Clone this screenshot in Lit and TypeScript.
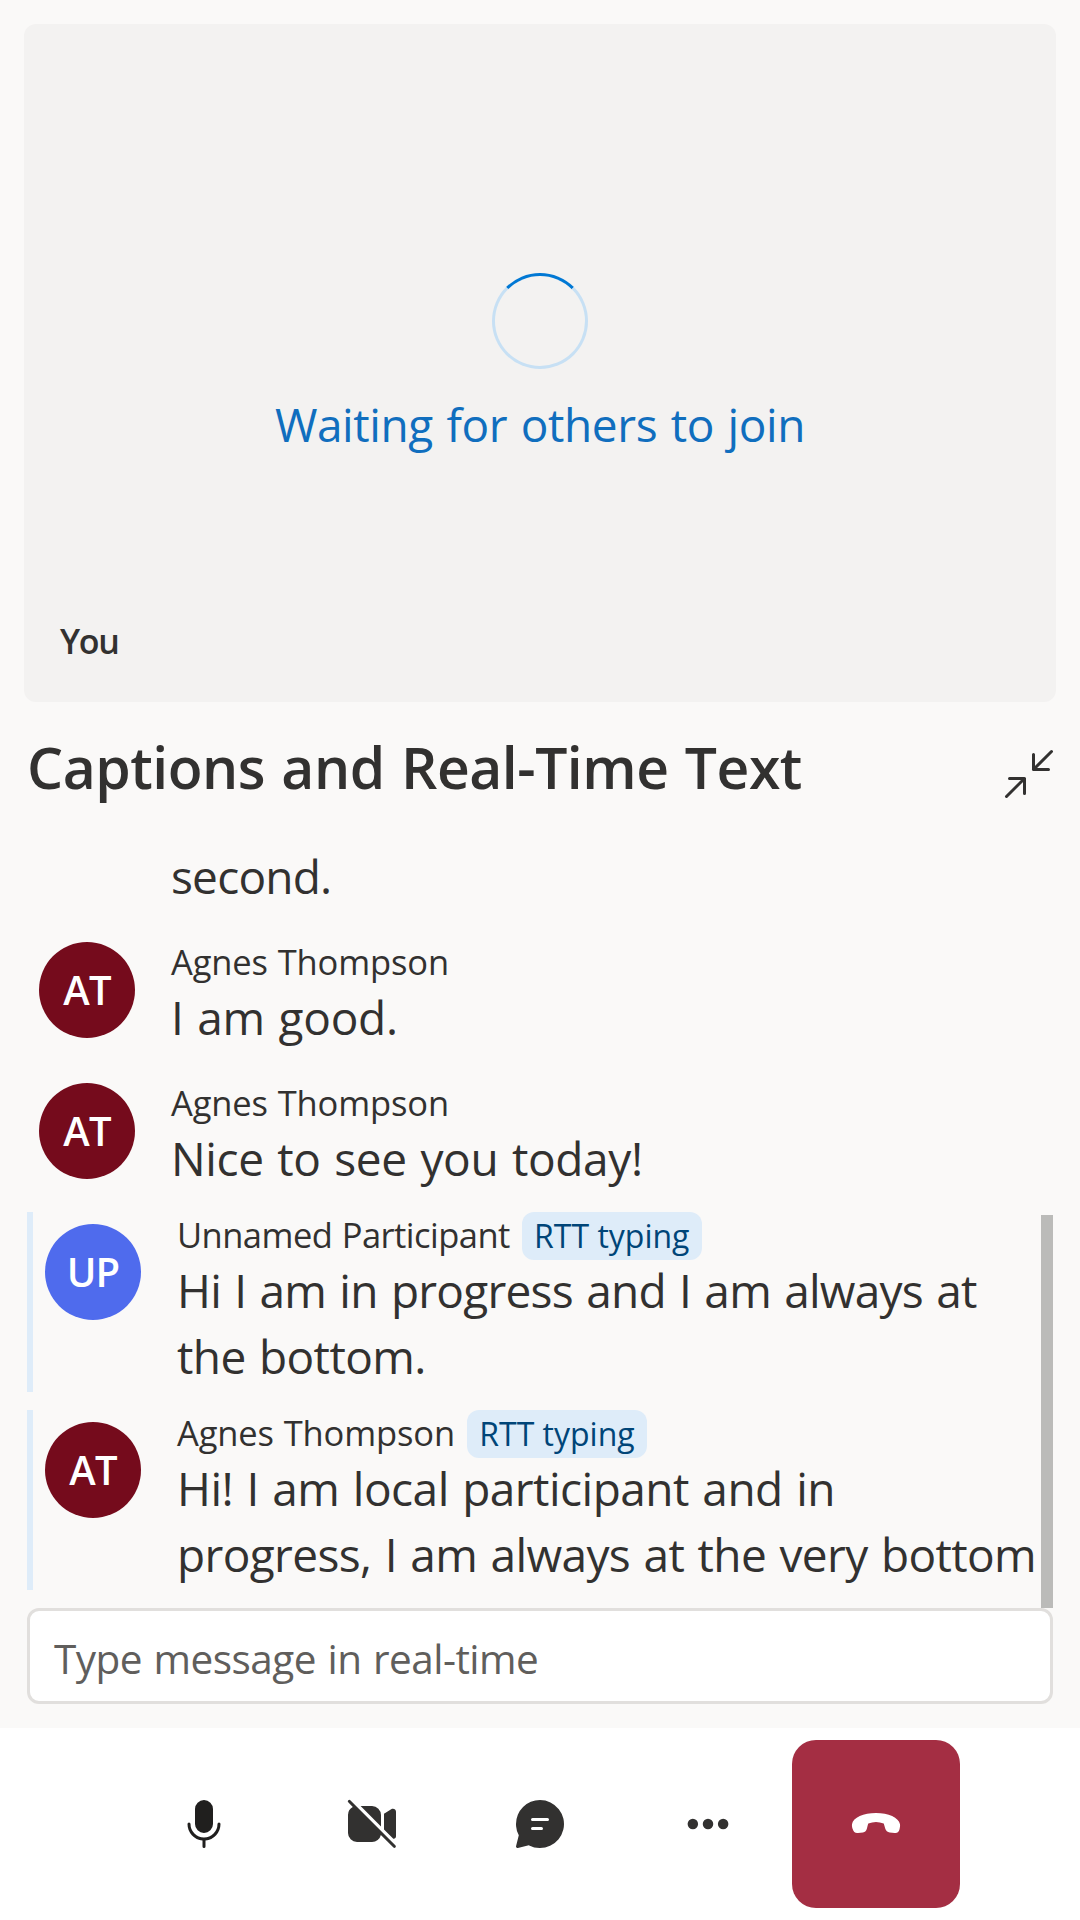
import { LitElement, html, css, svg, nothing } from "lit";
import { customElement, property } from "lit/decorators.js";
import { styleMap } from "lit/directives/style-map.js";

interface Line {
  text: string;
  tracking: number;
}

interface Caption {
  name: string;
  nameTracking: number;
  initials: string;
  color: "wine" | "blue";
  lines: Line[];
  typing?: boolean;
}

const captions: Caption[] = [
  {
    name: "Agnes Thompson",
    nameTracking: -0.13,
    initials: "AT",
    color: "wine",
    lines: [{ text: "I am good.", tracking: -0.27 }],
  },
  {
    name: "Agnes Thompson",
    nameTracking: -0.13,
    initials: "AT",
    color: "wine",
    lines: [{ text: "Nice to see you today!", tracking: -0.35 }],
  },
  {
    name: "Unnamed Participant",
    nameTracking: -0.54,
    initials: "UP",
    color: "blue",
    lines: [
      { text: "Hi I am in progress and I am always at", tracking: -0.75 },
      { text: "the bottom.", tracking: -0.6 },
    ],
    typing: true,
  },
  {
    name: "Agnes Thompson",
    nameTracking: -0.13,
    initials: "AT",
    color: "wine",
    lines: [
      { text: "Hi! I am local participant and in", tracking: -0.52 },
      { text: "progress, I am always at the very bottom", tracking: -0.62 },
    ],
    typing: true,
  },
];

const icons = {
  mic: svg`<path fill="#201f1e" d="M10 13a3 3 0 0 0 3-3V5a3 3 0 0 0-6 0v5a3 3 0 0 0 3 3ZM5.5 10a.5.5 0 0 0-1 0 5.5 5.5 0 0 0 5 5.48v2.02a.5.5 0 0 0 1 0v-2.02a5.5 5.5 0 0 0 5-5.48.5.5 0 0 0-1 0 4.5 4.5 0 1 1-9 0Z"/>`,
  videoOff: svg`<path d="M2.85 2.15a.5.5 0 1 0-.7.7L3.6 4.35A3 3 0 0 0 2 7v6a3 3 0 0 0 3 3h5a3 3 0 0 0 2.95-2.35l4.2 4.2a.5.5 0 0 0 .7-.7l-15-15ZM6.2 4H10a3 3 0 0 1 3 3v3.8L6.2 4ZM14 6.6v5.2l3.1 3.1c.5.1.9-.3.9-.8V5.9c0-.8-.9-1.2-1.6-.8L14 6.6Z"/>`,
  chat: svg`<path d="M10 2a8 8 0 1 1-3.61 15.14l-.12-.07-3.65.92a.5.5 0 0 1-.62-.45v-.08l.01-.08.92-3.64-.07-.12a7.95 7.95 0 0 1-.83-2.9l-.02-.37L2 10a8 8 0 0 1 8-8Zm.5 9h-3a.5.5 0 0 0 0 1h3a.5.5 0 1 0 0-1Zm2-3h-5a.5.5 0 0 0 0 1h5a.5.5 0 1 0 0-1Z"/>`,
  more: svg`<circle cx="4.95" cy="10" r="1.75"/><circle cx="10" cy="10" r="1.75"/><circle cx="15.05" cy="10" r="1.75"/>`,
  endCall: svg`<path fill="#fff" d="M10 6.33c4.1 0 7.6 1.5 8 3.75.06.5 0 1-.16 1.69a1.5 1.5 0 0 1-1.64 1.2l-1.63-.16c-.74-.07-1.29-.6-1.5-1.33-.25-.88-.35-1.15-.5-1.62a6.6 6.6 0 0 0-5.14 0c-.17.5-.22.8-.45 1.62-.2.72-.6 1.26-1.35 1.33l-1.62.16a1.6 1.6 0 0 1-1.75-1.2C2 11.1 1.95 10.6 2 10.08 2.35 7.8 5.9 6.33 10 6.33Z"/>`,
  minimize: svg`<path fill="none" stroke="#323130" stroke-linecap="round" stroke-linejoin="round" d="M17.5 2.5l-6 6M11.5 3.5v5h5M2.5 17.5l6-6M3.5 11.5h5v5"/>`,
};

@customElement("app-icon")
export class AppIcon extends LitElement {
  @property() name: keyof typeof icons = "mic";
  static styles = css`
    :host { display: block; width: 60px; height: 60px; flex: none; }
    .glyph { display: block; width: 60px; height: 60px; fill: #323130; }
  `;
  render() {
    return html`<svg class="glyph" viewBox="0 0 20 20" aria-hidden="true">${icons[this.name]}</svg>`;
  }
}

@customElement("caption-row")
export class CaptionRow extends LitElement {
  @property({ attribute: false }) caption!: Caption;
  static styles = css`
    :host { display: block; flex: none; }
    .row { display: flex; box-sizing: border-box; height: 123px; padding-left: 12px; }
    .row.typing { height: 180px; border-left: 6px solid #deecf9; }
    .avatar {
      width: 96px; height: 96px; flex: none; margin-top: 12px; border-radius: 50%;
      display: flex; align-items: center; justify-content: center;
      color: #fff; font-size: 40px; font-weight: 600; line-height: 54px; letter-spacing: -0.8px;
    }
    .wine { background: #750b1c; }
    .blue { background: #4f6bed; }
    .body { margin-left: 36px; padding-top: 9px; }
    .typing .body { padding-top: 0; }
    .head { display: flex; height: 48px; align-items: center; gap: 12px; }
    .name { font-size: 34.5px; line-height: 46px; padding-bottom: 2px; word-spacing: 1px; white-space: nowrap; }
    .badge {
      box-sizing: border-box; height: 48px; width: 180px; border-radius: 12px;
      background: #deecf9; color: #004578; font-size: 32px; line-height: 48px;
      text-align: center; white-space: nowrap;
    }
    .lines { margin-top: -3px; }
    .line { font-size: 46px; line-height: 66px; word-spacing: 2px; white-space: nowrap; }
  `;
  render() {
    const c = this.caption;
    return html`
      <div class="row ${c.typing ? "typing" : ""}">
        <div class="avatar ${c.color}">${c.initials}</div>
        <div class="body">
          <div class="head">
            <span class="name" style=${styleMap({ letterSpacing: `${c.nameTracking}px` })}>${c.name}</span>
            ${c.typing ? html`<span class="badge">RTT typing</span>` : nothing}
          </div>
          <div class="lines">
            ${c.lines.map(
              (l) => html`<div class="line" style=${styleMap({ letterSpacing: `${l.tracking}px` })}>${l.text}</div>`
            )}
          </div>
        </div>
      </div>
    `;
  }
}

@customElement("app-root")
export class AppRoot extends LitElement {
  static styles = css`
    :host {
      display: flex; flex-direction: column; width: 1080px; height: 1920px; overflow: hidden;
      background: #faf9f8; color: #323130;
      font-family: "Open Sans", "Noto Sans", sans-serif;
    }
    .stage {
      box-sizing: border-box; flex: none; height: 678px; margin: 24px 24px 0; padding: 249px 36px 37px;
      border-radius: 12px; background: #f3f2f1;
      display: flex; flex-direction: column; align-items: center;
    }
    .spinner {
      box-sizing: border-box; width: 96px; height: 96px; flex: none; border-radius: 50%;
      border: 3px solid #c7e0f4; border-top-color: #0078d4;
    }
    .waiting {
      margin-top: 22px; font-size: 46px; line-height: 66px; color: #106ebe;
      letter-spacing: -0.4px; word-spacing: 2px; white-space: nowrap;
    }
    .you {
      align-self: flex-start; margin-top: auto; font-size: 34px; line-height: 48px;
      font-weight: 600; letter-spacing: -1.3px;
    }
    .header {
      flex: none; display: flex; justify-content: space-between; align-items: center;
      height: 84px; margin-top: 27px; padding: 0 21px 0 27px;
    }
    .title {
      margin: 0 0 8px; font-size: 57px; font-weight: 600; line-height: 76px;
      letter-spacing: -0.48px; word-spacing: 2px; white-space: nowrap;
    }
    .min { margin-top: 6px; }
    .captions { flex: none; height: 795px; padding: 0 27px; display: flex; }
    .list {
      flex: 1; min-width: 0; display: flex; flex-direction: column; gap: 18px;
      box-sizing: border-box; padding-top: 30px;
    }
    .rest { margin-left: 144px; height: 69px; font-size: 46px; line-height: 66px; letter-spacing: -0.8px; }
    .thumb { flex: none; align-self: flex-end; width: 12px; height: 393px; background: #bbbbb9; }
    .field {
      box-sizing: border-box; flex: none; height: 96px; margin: 0 27px; padding: 4px 24px 0;
      border: 3px solid #e1dfdd; border-radius: 12px; background: #fff;
      display: flex; align-items: center; font-size: 40.5px; color: #605e5c;
      letter-spacing: -0.52px; word-spacing: 1.5px;
    }
    .bar { flex: none; height: 192px; margin-top: 24px; background: #fff; display: flex; justify-content: center; align-items: center; }
    .control { width: 168px; height: 168px; border-radius: 24px; display: flex; align-items: center; justify-content: center; }
    .end { background: #a42e43; }
  `;
  render() {
    return html`
      <section class="stage">
        <div class="spinner"></div>
        <div class="waiting">Waiting for others to join</div>
        <div class="you">You</div>
      </section>
      <header class="header">
        <h2 class="title">Captions and Real-Time Text</h2>
        <app-icon class="min" name="minimize"></app-icon>
      </header>
      <section class="captions">
        <div class="list">
          <div class="rest">second.</div>
          ${captions.map((c) => html`<caption-row .caption=${c}></caption-row>`)}
        </div>
        <div class="thumb"></div>
      </section>
      <div class="field">Type message in real-time</div>
      <nav class="bar">
        <div class="control"><app-icon name="mic"></app-icon></div>
        <div class="control"><app-icon name="videoOff"></app-icon></div>
        <div class="control"><app-icon name="chat"></app-icon></div>
        <div class="control"><app-icon name="more"></app-icon></div>
        <div class="control end"><app-icon name="endCall"></app-icon></div>
      </nav>
    `;
  }
}
